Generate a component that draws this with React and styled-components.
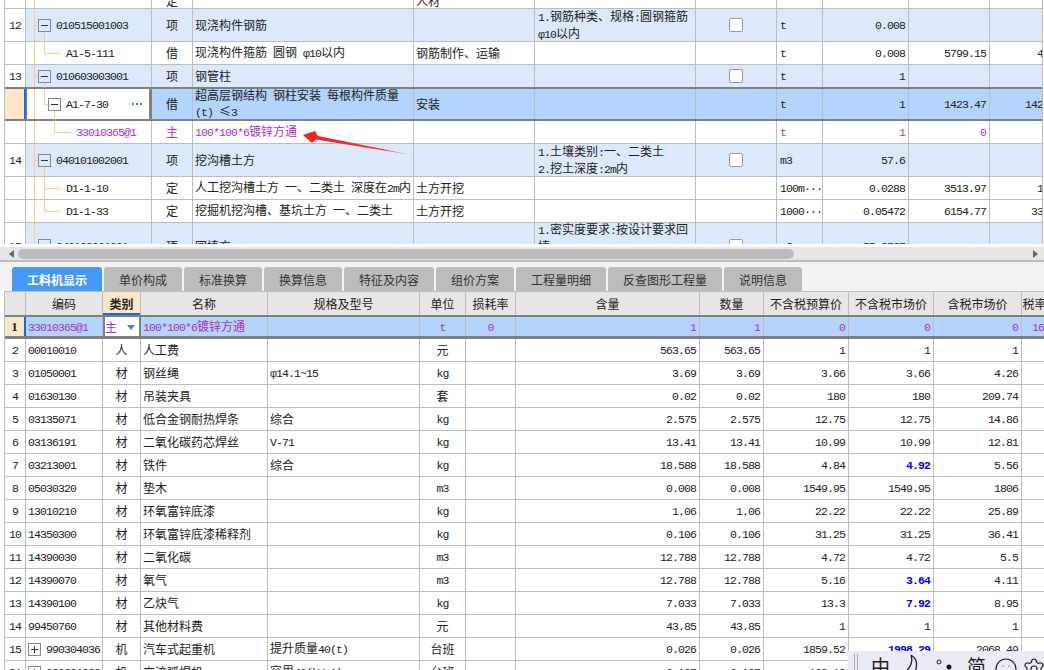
import React from "react"
import styled, { createGlobalStyle } from "styled-components"
import { Settings, Smile } from "lucide-react"

const GlobalStyle = createGlobalStyle`
  html, body {
    margin: 0;
    padding: 0;
    background: #fff;
  }
  * {
    box-sizing: border-box;
  }
`

const LINE = "#bdbdbd"
const DARK = "#808080"
const GUIDE = "#ffcb80"
const PURPLE = "#a933c4"
const ITEM_BG = "#dce9fd"
const SEL_BG = "#b3d4fc"
const ORANGE = "#fee6c8"

const TOP_COLS = "21px 126px 41px 221px 121px 161px 81px 46px 86px 81px 81px"
const BOTTOM_COLS = "21px 77px 38px 127px 152px 46px 50px 184px 64px 85px 85px 88px 26px"

const Page = styled.div`
  position: relative;
  width: 1044px;
  height: 670px;
  overflow: hidden;
  font-family: "Noto Sans CJK SC", "Liberation Sans", sans-serif;
  font-size: 12px;
  color: #222;
`
const Upper = styled.div`
  width: 1039px;
  height: 244px;
  margin-left: 4px;
  overflow: hidden;
  border-left: 1px solid ${LINE};
  border-right: 1px solid ${LINE};
`
const TopRow = styled.div`
  display: grid;
  grid-template-columns: ${TOP_COLS};
  width: 1100px;
  height: ${(p) => p.$h}px;
  background: ${(p) => (p.$tone === "item" ? ITEM_BG : p.$tone === "sel" ? SEL_BG : "#fff")};
  color: ${(p) => (p.$tone === "main" ? PURPLE : "inherit")};
  border-bottom: ${(p) => (p.$tone === "sel" ? `2px solid ${DARK}` : p.$open ? "0" : `1px solid ${LINE}`)};
  border-top: ${(p) => (p.$tone === "sel" ? `2px solid ${DARK}` : "0")};
`
const Cell = styled.div`
  display: flex;
  align-items: ${(p) => p.$v || "center"};
  justify-content: ${(p) => (p.$a === "r" ? "flex-end" : p.$a === "c" ? "center" : "flex-start")};
  min-width: 0;
  padding: 0 ${(p) => p.$pad ?? 2}px;
  overflow: hidden;
  line-height: ${(p) => p.$lh || 14}px;
  border-right: 1px solid ${LINE};
  white-space: ${(p) => (p.$wrap ? "normal" : "nowrap")};
`
const NameCell = styled(Cell)`
  padding-right: 0;
`
const SeqCell = styled(Cell)`
  justify-content: center;
  padding: 0;
  color: #222;
  background: ${(p) => (p.$active ? ORANGE : "#fff")};
  border-right: ${(p) => (p.$active ? "2px solid #0a6cff" : `1px solid ${LINE}`)};
`
const HeavyDigit = styled.span`
  font-family: "Liberation Serif", serif;
  font-size: 13px;
  font-weight: 700;
`
const TreeCell = styled(Cell)`
  position: relative;
  padding: 0 0 0 ${(p) => p.$indent}px;
  overflow: visible;
  background: ${(p) => (p.$active ? "#fff" : "transparent")};
  border-right: ${(p) => (p.$active ? `3px solid ${DARK}` : `1px solid ${LINE}`)};
  box-shadow: ${(p) => (p.$active ? `inset 1px 0 0 ${DARK}` : "none")};
`
const VGuide = styled.i`
  position: absolute;
  left: ${(p) => p.$x}px;
  top: ${(p) => p.$top};
  bottom: ${(p) => p.$bottom};
  width: 1px;
  background: ${GUIDE};
`
const HGuide = styled.i`
  position: absolute;
  left: ${(p) => p.$x}px;
  top: 50%;
  width: ${(p) => p.$w}px;
  height: 1px;
  background: ${GUIDE};
`
const Fold = styled.span`
  position: relative;
  flex: none;
  width: 13px;
  height: 13px;
  margin-right: 5px;
  border: 1px solid #8a8a8a;
  &::before {
    content: "";
    position: absolute;
    left: 2px;
    top: 5px;
    width: 7px;
    height: 1px;
    background: #333;
  }
  &::after {
    content: "";
    display: ${(p) => (p.$plus ? "block" : "none")};
    position: absolute;
    left: 5px;
    top: 2px;
    width: 1px;
    height: 7px;
    background: #333;
  }
`
const MoreDots = styled.svg`
  position: absolute;
  right: 7px;
  top: 50%;
  margin-top: -1px;
`
const Tick = styled.span`
  width: 14px;
  height: 14px;
  background: #fff;
  border: 1px solid #999;
  border-radius: 2px;
`
const Body = styled.span`
  display: block;
  white-space: pre-wrap;
`
const Latin = styled.span`
  font-family: "Liberation Mono", monospace;
  font-size: 11.5px;
  letter-spacing: -0.9px;
`
const Track = styled.div`
  display: flex;
  align-items: center;
  height: 15px;
  margin-top: 3px;
  padding: 0 6px 0 9px;
  background: #e6e6e6;
  border-bottom: 2px solid ${LINE};
`
const ArrowHead = styled.span`
  width: 0;
  height: 0;
  border-top: 4px solid transparent;
  border-bottom: 4px solid transparent;
  border-left: ${(p) => (p.$right ? "5px solid #666" : "0")};
  border-right: ${(p) => (p.$right ? "0" : "5px solid #666")};
  margin-left: ${(p) => (p.$right ? "auto" : "0")};
`
const Thumb = styled.span`
  width: 776px;
  height: 10px;
  margin-left: 4px;
  background: #bbb;
  border-radius: 5px;
`
const TabStrip = styled.div`
  display: flex;
  align-items: flex-end;
  gap: 2px;
  height: 29px;
  padding-left: 12px;
  background: #f3f3f3;
`
const Tab = styled.div`
  display: flex;
  align-items: center;
  justify-content: center;
  width: ${(p) => p.$w}px;
  height: 24px;
  border-radius: 3px 3px 0 0;
  background: ${(p) => (p.$active ? "#4499ff" : "#bcbcbc")};
  color: ${(p) => (p.$active ? "#fff" : "#333")};
  font-weight: ${(p) => (p.$active ? 700 : 400)};
`
const Sheet = styled.div`
  width: 1040px;
  margin-left: 4px;
  border-left: 1px solid ${LINE};
`
const HeadRow = styled.div`
  display: grid;
  grid-template-columns: ${BOTTOM_COLS};
  width: 1100px;
  height: 24px;
  background: #e6e6e6;
  border-top: 1px solid ${LINE};
`
const HeadCell = styled.div`
  display: flex;
  align-items: center;
  justify-content: center;
  border-right: 1px solid ${LINE};
  background: ${(p) => (p.$sorted ? ORANGE : "transparent")};
  font-weight: ${(p) => (p.$sorted ? 700 : 400)};
  box-shadow: ${(p) => (p.$sorted ? "inset 0 -2px 0 #0a6cff" : "none")};
`
const SheetRow = styled.div`
  display: grid;
  grid-template-columns: ${BOTTOM_COLS};
  width: 1100px;
  height: ${(p) => (p.$sel ? 24 : 23)}px;
  background: ${(p) => (p.$sel ? SEL_BG : "#fff")};
  color: ${(p) => (p.$sel ? PURPLE : "inherit")};
  border-top: ${(p) => (p.$sel ? `2px solid ${DARK}` : "0")};
  border-bottom: ${(p) => (p.$sel ? `3px solid ${DARK}` : `1px solid ${LINE}`)};
`
const PickCell = styled(Cell)`
  position: relative;
  background: #fff;
  border-left: 2px solid ${DARK};
  border-right: 2px solid ${DARK};
  padding: 0;
`
const Caret = styled.span`
  position: absolute;
  right: 4px;
  top: 8px;
  width: 0;
  height: 0;
  border-left: 4px solid transparent;
  border-right: 4px solid transparent;
  border-top: 5px solid #4a86b8;
`
const Price = styled.span`
  color: ${(p) => (p.$hot ? "#0000ff" : "inherit")};
  font-weight: ${(p) => (p.$hot ? 700 : 400)};
`
const Pointer = styled.svg`
  position: absolute;
  left: 300px;
  top: 128px;
`
const ImeBar = styled.div`
  position: absolute;
  left: 848px;
  top: 651px;
  display: flex;
  align-items: flex-start;
  width: 196px;
  height: 19px;
  padding: 3px 0 0 6px;
  overflow: hidden;
  background: #ebebf5;
  color: #222;
`
const ImeGrip = styled.span`
  flex: none;
  width: 4px;
  height: 16px;
  margin-right: 13px;
  border-left: 1px solid #aaa;
  border-right: 1px solid #aaa;
`
const ImeWord = styled.span`
  flex: none;
  width: ${(p) => p.$w}px;
  font-size: 19px;
  line-height: 24px;
`
const ImeIcon = styled.svg`
  flex: none;
  margin-right: ${(p) => p.$gap}px;
`
const ImeGlyph = styled.span`
  display: flex;
  flex: none;
  margin: 3px 0 0 ${(p) => p.$left}px;
`

// splits cjk from latin runs, the sheet's font has half width latin
const Mixed = ({ text }) => (
  <Body>
    {String(text)
      .split(/([\x20-\x7e\u00b7\u03c6]+)/)
      .filter(Boolean)
      .map((part, i) =>
        /^[\x20-\x7e\u00b7\u03c6]/.test(part) ? <Latin key={i}>{part}</Latin> : part,
      )}
  </Body>
)

const Guides = ({ depth, box, open, last }) => (
  <>
    <VGuide $x={8} $top="0" $bottom="0" />
    {depth === 0 && <HGuide $x={8} $w={4} />}
    {depth === 0 && open && <VGuide $x={18} $top="calc(50% + 6px)" $bottom="-1px" />}
    {depth === 1 && <VGuide $x={18} $top="0" $bottom={last ? "50%" : "-1px"} />}
    {depth === 1 && <HGuide $x={18} $w={box ? 4 : 17} />}
    {depth === 1 && box && <VGuide $x={28} $top="calc(50% + 6px)" $bottom="-2px" />}
    {depth === 2 && <VGuide $x={28} $top="0" $bottom="50%" />}
    {depth === 2 && <HGuide $x={28} $w={17} />}
  </>
)

const upperRows = [
  { h: 9, cut: true, depth: -1, type: "定", spec: "人材" },
  { h: 33, seq: 12, tone: "item", depth: 0, box: true, open: true, code: "010515001003", type: "项", name: "现浇构件钢筋", feature: "1.钢筋种类、规格:圆钢箍筋 φ10以内", tick: true, unit: "t", qty: "0.008" },
  { h: 23, depth: 1, last: true, code: "A1-5-111", type: "借", name: "现浇构件箍筋 圆钢 φ10以内", spec: "钢筋制作、运输", unit: "t", qty: "0.008", price: "5799.15", total: "46.39" },
  { h: 22, seq: 13, tone: "item", depth: 0, box: true, open: true, noLine: true, code: "010603003001", type: "项", name: "钢管柱", tick: true, unit: "t", qty: "1" },
  { h: 34, tone: "sel", depth: 1, box: true, last: true, code: "A1-7-30", type: "借", name: "超高层钢结构 钢柱安装 每根构件质量 (t) ≤3", spec: "安装", unit: "t", qty: "1", price: "1423.47", total: "1423.47" },
  { h: 23, tone: "main", depth: 2, code: "33010365@1", type: "主", name: "100*100*6镀锌方通", unit: "t", qty: "1", price: "0" },
  { h: 33, seq: 14, tone: "item", depth: 0, box: true, open: true, code: "040101002001", type: "项", name: "挖沟槽土方", feature: "1.土壤类别:一、二类土\n2.挖土深度:2m内", tick: true, unit: "m3", qty: "57.6" },
  { h: 23, depth: 1, code: "D1-1-10", type: "定", name: "人工挖沟槽土方 一、二类土 深度在2m内", spec: "土方开挖", unit: "100m···", qty: "0.0288", price: "3513.97", total: "101.2" },
  { h: 23, depth: 1, last: true, code: "D1-1-33", type: "定", name: "挖掘机挖沟槽、基坑土方 一、二类土", spec: "土方开挖", unit: "1000···", qty: "0.05472", price: "6154.77", total: "336.79" },
  { h: 46, seq: 15, tone: "item", depth: 0, box: true, code: "040103001001", type: "项", name: "回填方", feature: "1.密实度要求:按设计要求回填\n2.分层夯实", tick: true, unit: "m3", qty: "55.6767" },
]

const UpperRow = ({ row }) => {
  const active = row.tone === "sel"
  const indent = row.depth === 2 ? 50 : row.depth === 1 && !row.box ? 40 : row.depth === 1 ? 22 : 12
  return (
    <TopRow $h={row.h} $tone={row.tone} $open={row.noLine}>
      <SeqCell $active={active}>{row.seq && <Mixed text={row.seq} />}</SeqCell>
      <TreeCell $indent={indent} $active={active}>
        <Guides depth={row.depth} box={row.box} open={row.open} last={row.last} />
        {row.box && <Fold />}
        {row.code && <Mixed text={row.code} />}
        {active && (
          <MoreDots width="10" height="2" viewBox="0 0 10 2">
            <path d="M0 0h2v2H0zM4 0h2v2H4zM8 0h2v2H8z" fill="#3d85c6" />
          </MoreDots>
        )}
      </TreeCell>
      <Cell $a="c" $v={row.cut ? "flex-end" : undefined}>
        <Mixed text={row.type} />
      </Cell>
      <NameCell $wrap>{row.name && <Mixed text={row.name} />}</NameCell>
      <Cell $v={row.cut ? "flex-end" : undefined}>{row.spec && <Mixed text={row.spec} />}</Cell>
      <Cell $wrap $lh={15} $pad={3}>
        {row.feature && <Mixed text={row.feature} />}
      </Cell>
      <Cell $a="c">{row.tick && <Tick />}</Cell>
      <Cell $pad={3}>{row.unit && <Mixed text={row.unit} />}</Cell>
      <Cell $a="r" $pad={3}>{row.qty && <Mixed text={row.qty} />}</Cell>
      <Cell $a="r" $pad={3}>{row.price && <Mixed text={row.price} />}</Cell>
      <Cell $a="r" $pad={3}>{row.total && <Mixed text={row.total} />}</Cell>
    </TopRow>
  )
}

const tabs = [
  ["工料机显示", 90],
  ["单价构成", 78],
  ["标准换算", 78],
  ["换算信息", 78],
  ["特征及内容", 90],
  ["组价方案", 78],
  ["工程量明细", 90],
  ["反查图形工程量", 114],
  ["说明信息", 78],
]

const heads = ["", "编码", "类别", "名称", "规格及型号", "单位", "损耗率", "含量", "数量", "不含税预算价", "不含税市场价", "含税市场价", "税率"]

const sheetRows = [
  ["2", "00010010", "人", "人工费", "", "元", "563.65", "563.65", "1", "1", "1"],
  ["3", "01050001", "材", "钢丝绳", "φ14.1~15", "kg", "3.69", "3.69", "3.66", "3.66", "4.26"],
  ["4", "01630130", "材", "吊装夹具", "", "套", "0.02", "0.02", "180", "180", "209.74"],
  ["5", "03135071", "材", "低合金钢耐热焊条", "综合", "kg", "2.575", "2.575", "12.75", "12.75", "14.86"],
  ["6", "03136191", "材", "二氧化碳药芯焊丝", "V-71", "kg", "13.41", "13.41", "10.99", "10.99", "12.81"],
  ["7", "03213001", "材", "铁件", "综合", "kg", "18.588", "18.588", "4.84", "!4.92", "5.56"],
  ["8", "05030320", "材", "垫木", "", "m3", "0.008", "0.008", "1549.95", "1549.95", "1806"],
  ["9", "13010210", "材", "环氧富锌底漆", "", "kg", "1.06", "1.06", "22.22", "22.22", "25.89"],
  ["10", "14350300", "材", "环氧富锌底漆稀释剂", "", "kg", "0.106", "0.106", "31.25", "31.25", "36.41"],
  ["11", "14390030", "材", "二氧化碳", "", "m3", "12.788", "12.788", "4.72", "4.72", "5.5"],
  ["12", "14390070", "材", "氧气", "", "m3", "12.788", "12.788", "5.16", "!3.64", "4.11"],
  ["13", "14390100", "材", "乙炔气", "", "kg", "7.033", "7.033", "13.3", "!7.92", "8.95"],
  ["14", "99450760", "材", "其他材料费", "", "元", "43.85", "43.85", "1", "1", "1"],
  ["15", "+990304036", "机", "汽车式起重机", "提升质量40(t)", "台班", "0.026", "0.026", "1859.52", "!1998.29", "2068.49"],
  ["21", "+990901020", "机", "交流弧焊机", "容里40(kV.A)", "台班", "0.197", "0.197", "102.12", "102.12", "116.5"],
]

const Amount = ({ value }) => {
  const hot = value.startsWith("!")
  return (
    <Price $hot={hot}>
      <Mixed text={hot ? value.slice(1) : value} />
    </Price>
  )
}

const SheetLine = ({ row }) => {
  const [seq, code, type, name, spec, unit, content, qty, budget, market, taxed] = row
  const fold = code.startsWith("+")
  return (
    <SheetRow>
      <SeqCell><Mixed text={seq} /></SeqCell>
      <Cell>
        {fold && <Fold $plus />}
        <Mixed text={fold ? code.slice(1) : code} />
      </Cell>
      <Cell $a="c"><Mixed text={type} /></Cell>
      <Cell><Mixed text={name} /></Cell>
      <Cell>{spec && <Mixed text={spec} />}</Cell>
      <Cell $a="c"><Mixed text={unit} /></Cell>
      <Cell />
      {[content, qty, budget, market, taxed].map((value, i) => (
        <Cell key={i} $a="r" $pad={3}>
          <Amount value={value} />
        </Cell>
      ))}
      <Cell />
    </SheetRow>
  )
}

const App = () => (
  <Page>
    <GlobalStyle />
    <Upper>
      {upperRows.map((row, i) => (
        <UpperRow key={i} row={row} />
      ))}
    </Upper>
    <Track>
      <ArrowHead />
      <Thumb />
      <ArrowHead $right />
    </Track>
    <TabStrip>
      {tabs.map(([label, w], i) => (
        <Tab key={label} $w={w} $active={i === 0}>{label}</Tab>
      ))}
    </TabStrip>
    <Sheet>
      <HeadRow>
        {heads.map((label, i) => (
          <HeadCell key={i} $sorted={label === "类别"}>{label}</HeadCell>
        ))}
      </HeadRow>
      <SheetRow $sel>
        <SeqCell $active><HeavyDigit>1</HeavyDigit></SeqCell>
        <Cell><Mixed text="33010365@1" /></Cell>
        <PickCell>
          <Mixed text="主" />
          <Caret />
        </PickCell>
        <Cell><Mixed text="100*100*6镀锌方通" /></Cell>
        <Cell />
        <Cell $a="c"><Mixed text="t" /></Cell>
        <Cell $a="c"><Mixed text="0" /></Cell>
        {["1", "1", "0", "0", "0", "16"].map((value, i) => (
          <Cell key={i} $a="r" $pad={3}><Mixed text={value} /></Cell>
        ))}
      </SheetRow>
      {sheetRows.map((row) => (
        <SheetLine key={row[0]} row={row} />
      ))}
    </Sheet>
    <Pointer width="116" height="30" viewBox="300 128 116 30">
      <defs>
        <linearGradient id="tail" x1="303" y1="135" x2="412" y2="155" gradientUnits="userSpaceOnUse">
          <stop offset="0" stopColor="#ff1f1f" />
          <stop offset="0.7" stopColor="#ff2a2a" />
          <stop offset="1" stopColor="#ffb0b0" />
        </linearGradient>
      </defs>
      <polygon points="303,135 315,131 318,136 412,155 316,139.5 312,143" fill="url(#tail)" />
    </Pointer>
    <ImeBar>
      <ImeGrip />
      <ImeWord $w={35}>中</ImeWord>
      <ImeIcon $gap={16} width="14" height="20" viewBox="0 0 14 20" fill="none" stroke="#222" strokeWidth="1.3">
        <path d="M5 1c5 3 7 9 4 17M5 1c2 6 0 11-4 15" />
      </ImeIcon>
      <ImeIcon $gap={15} width="16" height="16" viewBox="0 0 16 16">
        <circle cx="3" cy="8" r="2" fill="none" stroke="#222" strokeWidth="1" />
        <circle cx="13" cy="13" r="2.5" fill="#111" />
      </ImeIcon>
      <ImeWord $w={26}>简</ImeWord>
      <ImeGlyph $left={1}><Smile size={24} strokeWidth={1.2} color="#222" /></ImeGlyph>
      <ImeGlyph $left={4}><Settings size={24} strokeWidth={1.2} color="#222" /></ImeGlyph>
    </ImeBar>
  </Page>
)

export default App
